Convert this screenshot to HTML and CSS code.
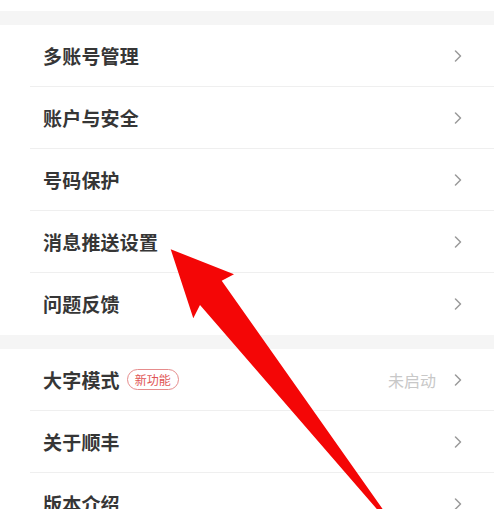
FILE: index.html
```html
<!DOCTYPE html>
<html lang="zh-CN">
<head>
<meta charset="utf-8">
<title>设置</title>
<link rel="stylesheet" href="styles.css">
</head>
<body>
<div class="page">
  <div class="top-space"></div>
  <div class="gap"></div>
  <div class="group">
    <div class="row"><div class="row-inner"><span class="label">多账号管理</span><span class="right"><svg class="chev" viewBox="0 0 8 12" width="8" height="12"><polyline points="1.5,1 6.5,6 1.5,11"/></svg></span></div></div>
    <div class="row"><div class="row-inner"><span class="label">账户与安全</span><span class="right"><svg class="chev" viewBox="0 0 8 12" width="8" height="12"><polyline points="1.5,1 6.5,6 1.5,11"/></svg></span></div></div>
    <div class="row"><div class="row-inner"><span class="label">号码保护</span><span class="right"><svg class="chev" viewBox="0 0 8 12" width="8" height="12"><polyline points="1.5,1 6.5,6 1.5,11"/></svg></span></div></div>
    <div class="row"><div class="row-inner"><span class="label">消息推送设置</span><span class="right"><svg class="chev" viewBox="0 0 8 12" width="8" height="12"><polyline points="1.5,1 6.5,6 1.5,11"/></svg></span></div></div>
    <div class="row last"><div class="row-inner"><span class="label">问题反馈</span><span class="right"><svg class="chev" viewBox="0 0 8 12" width="8" height="12"><polyline points="1.5,1 6.5,6 1.5,11"/></svg></span></div></div>
  </div>
  <div class="gap"></div>
  <div class="group">
    <div class="row"><div class="row-inner"><span class="label">大字模式<span class="badge">新功能</span></span><span class="right"><span class="status">未启动</span><svg class="chev" viewBox="0 0 8 12" width="8" height="12"><polyline points="1.5,1 6.5,6 1.5,11"/></svg></span></div></div>
    <div class="row"><div class="row-inner"><span class="label">关于顺丰</span><span class="right"><svg class="chev" viewBox="0 0 8 12" width="8" height="12"><polyline points="1.5,1 6.5,6 1.5,11"/></svg></span></div></div>
    <div class="row"><div class="row-inner"><span class="label">版本介绍</span><span class="right"><svg class="chev" viewBox="0 0 8 12" width="8" height="12"><polyline points="1.5,1 6.5,6 1.5,11"/></svg></span></div></div>
  </div>
  <svg class="arrow" viewBox="0 0 494 509" width="494" height="509">
    <polygon points="170.7,249.3 234,274.3 221.7,280.7 408,545 200,305 193.3,318.3"/>
  </svg>
</div>
</body>
</html>
```

FILE: styles.css
```css
html, body {
  margin: 0;
  padding: 0;
  background: #ffffff;
}
body {
  font-family: "Noto Sans CJK SC", "Noto Sans", sans-serif;
  color: #333333;
  overflow: hidden;
}
.page {
  position: relative;
  width: 494px;
  height: 509px;
  overflow: hidden;
}
.top-space {
  height: 11px;
  background: #ffffff;
}
.gap {
  height: 14px;
  background: #f5f5f5;
}
.group {
  background: #ffffff;
}
.row {
  padding-left: 30px;
}
.row-inner {
  height: 61px;
  border-bottom: 1px solid #efefef;
  display: flex;
  align-items: center;
  justify-content: space-between;
  padding-left: 13px;
  padding-right: 32px;
}
.group:first-of-type .row:first-child .row-inner {
  height: 62px;
}
.row.last .row-inner {
  border-bottom-color: transparent;
}
.label {
  display: flex;
  align-items: center;
  font-size: 19px;
  font-weight: 700;
  color: #363636;
  letter-spacing: 0.2px;
}
.badge {
  margin-left: 7px;
  height: 19px;
  line-height: 19px;
  padding: 0 7px;
  border: 1px solid #e68c8c;
  border-radius: 11px;
  color: #df5555;
  font-size: 12px;
  font-weight: 400;
  letter-spacing: 0;
}
.right {
  display: flex;
  align-items: center;
}
.status {
  font-size: 16px;
  color: #c8c8c8;
  margin-right: 18px;
}
.chev {
  display: block;
}
.chev polyline {
  fill: none;
  stroke: #9a9a9a;
  stroke-width: 1.5;
  stroke-linecap: round;
  stroke-linejoin: round;
}
.arrow {
  position: absolute;
  left: 0;
  top: 0;
  pointer-events: none;
}
.arrow polygon {
  fill: #f40606;
}
```
